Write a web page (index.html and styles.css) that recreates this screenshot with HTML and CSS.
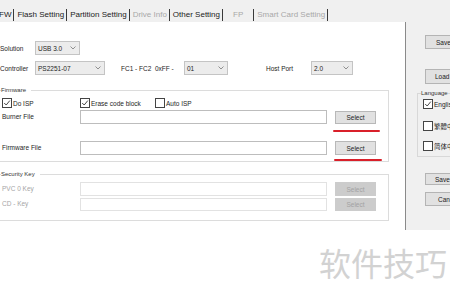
FILE: index.html
```html
<!DOCTYPE html>
<html lang="en">
<head>
    <meta charset="UTF-8">
    <title>Flash Setting</title>
    <link rel="stylesheet" href="styles.css">
</head>
<body>
    <div class="tabs">
        <span class="tab first">FW</span>
        <span class="tab">Flash Setting</span>
        <span class="tab">Partition Setting</span>
        <span class="tab off">Drive Info</span>
        <span class="tab">Other Setting</span>
        <span class="tab off wide">FP</span>
        <span class="tab off">Smart Card Setting</span>
    </div>

    <div class="workspace">
        <div class="panel">
            <div class="row">
                <span class="lbl">Solution</span>
                <div class="combo solution">USB 3.0<svg width="6" height="4" viewBox="0 0 6 4"><path d="M0.5 0.5L3 3L5.5 0.5" /></svg></div>
            </div>
            <div class="row gap">
                <span class="lbl">Controller</span>
                <div class="combo controller">PS2251-07<svg width="6" height="4" viewBox="0 0 6 4"><path d="M0.5 0.5L3 3L5.5 0.5" /></svg></div>
                <span class="fc">FC1 - FC2&nbsp;&nbsp;0xFF -</span>
                <div class="combo fcval">01<svg width="6" height="4" viewBox="0 0 6 4"><path d="M0.5 0.5L3 3L5.5 0.5" /></svg></div>
                <span class="host">Host Port</span>
                <div class="combo port">2.0<svg width="6" height="4" viewBox="0 0 6 4"><path d="M0.5 0.5L3 3L5.5 0.5" /></svg></div>
            </div>

            <fieldset class="group firmware">
                <legend>Firmware</legend>
                <div class="checks">
                    <label class="check c1"><span class="box on"><svg width="8" height="8" viewBox="0 0 8 8"><path d="M1.2 4L3.2 6L6.8 1.6" /></svg></span>Do ISP</label>
                    <label class="check c2"><span class="box on"><svg width="8" height="8" viewBox="0 0 8 8"><path d="M1.2 4L3.2 6L6.8 1.6" /></svg></span>Erase code block</label>
                    <label class="check"><span class="box"></span>Auto ISP</label>
                </div>
                <div class="file-row burner">
                    <span class="flbl">Burner File</span>
                    <div class="field"></div>
                    <div class="pick">
                        <button class="btn">Select</button>
                        <span class="mark m1"></span>
                    </div>
                </div>
                <div class="file-row fwfile">
                    <span class="flbl">Firmware File</span>
                    <div class="field"></div>
                    <div class="pick">
                        <button class="btn">Select</button>
                        <span class="mark m2"></span>
                    </div>
                </div>
            </fieldset>

            <fieldset class="group security">
                <legend>Security Key</legend>
                <div class="file-row key">
                    <span class="flbl dim">PVC 0 Key</span>
                    <div class="field dis"></div>
                    <div class="pick"><button class="btn dis">Select</button></div>
                </div>
                <div class="file-row key second">
                    <span class="flbl dim">CD - Key</span>
                    <div class="field dis"></div>
                    <div class="pick"><button class="btn dis">Select</button></div>
                </div>
            </fieldset>
        </div>

        <div class="side">
            <div class="side-inner">
                <button class="sbtn save-top">Save</button>
                <button class="sbtn load">Load</button>
                <fieldset class="lang">
                    <legend>Language</legend>
                    <label class="check l1"><span class="box on"><svg width="8" height="8" viewBox="0 0 8 8"><path d="M1.2 4L3.2 6L6.8 1.6" /></svg></span>English</label>
                    <label class="check l2"><span class="box"></span>繁體中文</label>
                    <label class="check l3"><span class="box"></span>简体中文</label>
                </fieldset>
                <button class="sbtn save">Save</button>
                <button class="sbtn cancel">Cancel</button>
            </div>
        </div>
    </div>

    <div class="watermark">软件技巧</div>
</body>
</html>
```

FILE: styles.css
```css
body {
    margin: 0;
    width: 450px;
    height: 297px;
    overflow: hidden;
    background: #ffffff;
    font-family: 'Liberation Sans', Arial, 'Noto Sans CJK SC', sans-serif;
    font-size: 6.5px;
    color: #1e1e1e;
}

/* tab strip */
.tabs {
    height: 22px;
    background: #f0f0f0;
    display: flex;
    align-items: flex-end;
    box-sizing: border-box;
    padding-bottom: 1px;
}

.tab {
    font-size: 8px;
    line-height: 12px;
    height: 12px;
    padding: 0 2px 0 3px;
    border-right: 1px solid #3a3a3a;
    color: #222;
    white-space: nowrap;
}

.tab.first {
    padding-left: 0;
    margin-left: -1px;
}

.tab.off {
    color: #a8a8a8;
}

.tab.wide {
    padding: 0 10px 0 10px;
}

.workspace {
    display: flex;
    height: 208px;
}

/* left white page */
.panel {
    width: 405px;
    flex-shrink: 0;
    padding-top: 19px;
    box-sizing: border-box;
}

.row {
    display: flex;
    align-items: center;
    height: 14px;
}

.row.gap {
    margin-top: 6px;
}

.lbl {
    width: 35px;
}

.combo {
    height: 14px;
    box-sizing: border-box;
    border: 1px solid #c4c4c4;
    background: #ececec;
    display: flex;
    align-items: center;
    justify-content: space-between;
    padding: 0 3px 0 2px;
}

.combo svg path {
    fill: none;
    stroke: #777;
    stroke-width: 0.8;
}

.solution { width: 45px; }
.controller { width: 70px; margin-right: 16px; }
.fcval { width: 44px; margin-right: 38px; }
.port { width: 42px; }

.fc { width: 63px; }
.host { width: 45px; }

/* group boxes */
.group {
    margin: 11px 0 0 -2px;
    width: 391px;
    box-sizing: border-box;
    border: 1px solid #dcdcdc;
    padding: 0 0 6px 3px;
}

.group legend {
    font-size: 6px;
    line-height: 8px;
    padding: 0 5px 0 0;
    margin-left: -1px;
    color: #333;
}

.security {
    margin-top: 8px;
    padding-bottom: 9px;
}

.checks {
    display: flex;
    align-items: center;
    height: 10px;
    margin-top: 4px;
}

.check {
    display: flex;
    align-items: center;
    gap: 1px;
    white-space: nowrap;
}

.c1 { width: 78px; }
.c2 { width: 75px; }

.box {
    width: 8px;
    height: 8px;
    border: 1px solid #444;
    background: #fff;
    display: inline-flex;
}

.box svg path {
    fill: none;
    stroke: #333;
    stroke-width: 0.9;
}

.file-row {
    display: flex;
    align-items: center;
    height: 14px;
}

.burner { margin-top: 2px; }
.fwfile { margin-top: 17px; }
.key { margin-top: 4px; }
.key.second { margin-top: 2px; height: 13px; }

.flbl {
    width: 78px;
    margin-top: -2px;
}

.flbl.dim {
    color: #a6a6a6;
}

.field {
    width: 247px;
    height: 14px;
    box-sizing: border-box;
    border: 1px solid #bdbdbd;
    background: #fff;
}

.key .field { height: 100%; }

.field.dis {
    border-color: #e2e2e2;
}

.pick {
    position: relative;
    margin-left: 8px;
    height: 100%;
}

.btn {
    width: 41px;
    height: 13px;
    margin-top: 1px;
    padding: 0;
    font-family: inherit;
    font-size: 6.5px;
    color: #222;
    background: #e1e1e1;
    border: 1px solid #b8b8b8;
}

.fwfile .btn {
    height: 14px;
    margin-top: 0;
}

.btn.dis {
    margin-top: 0;
    height: 100%;
    background: #cccccc;
    border-color: #cccccc;
    color: #a2a2a2;
}

/* red hand-drawn marks over the page */
.mark {
    position: absolute;
    height: 2px;
    background: #d9202a;
    border-radius: 1px;
}

.m1 { left: -2px; width: 47px; top: 20px; }
.m2 { left: -1px; width: 48px; top: 18px; }

/* right grey panel */
.side {
    width: 44px;
    flex-shrink: 0;
    border-left: 1px solid #8a8a8a;
    background: #f0f0f0;
    overflow: hidden;
}

.side-inner {
    width: 80px;
    padding: 13px 0 0 11px;
    display: flex;
    flex-direction: column;
    align-items: flex-start;
}

.sbtn {
    margin-left: 8px;
    width: 50px;
    height: 14px;
    padding: 0 0 0 10px;
    text-align: left;
    font-family: inherit;
    font-size: 6.5px;
    color: #222;
    background: #e1e1e1;
    border: 1px solid #b4b4b4;
    flex-shrink: 0;
}

.load { margin-top: 20px; height: 15px; padding-left: 9px; }
.save { margin-top: 16px; height: 12px; padding-left: 9px; }
.cancel { margin-top: 7px; padding-left: 12px; }

.lang {
    margin: 5px 0 0 0;
    width: 70px;
    box-sizing: border-box;
    border: 1px solid #d8d8d8;
    padding: 0 0 5px 5px;
}

.lang legend {
    font-size: 6px;
    line-height: 8px;
    padding: 0;
    margin-left: -2px;
    color: #333;
}

.lang .check {
    height: 10px;
    font-family: 'Liberation Sans', 'Noto Sans CJK TC', sans-serif;
}

.l1 { margin-top: 2px; }
.l2 { margin-top: 12px; }
.l3 { margin-top: 10px; font-family: 'Liberation Sans', 'Noto Sans CJK SC', sans-serif; }

.watermark {
    margin-top: 12px;
    text-align: right;
    padding-right: 3px;
    font-family: 'Noto Sans CJK SC', sans-serif;
    font-size: 32px;
    line-height: 40px;
    color: #d2d2d2;
}
```
